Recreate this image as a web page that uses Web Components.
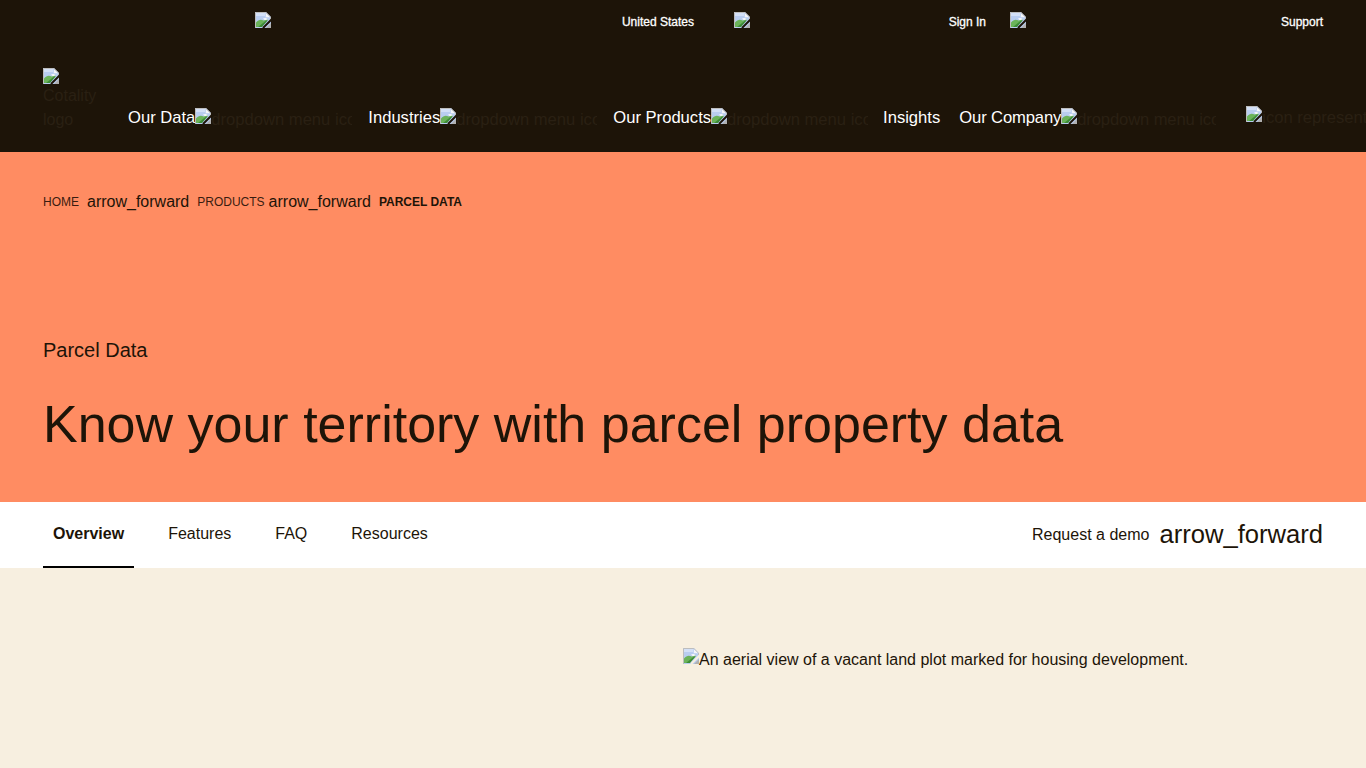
<!DOCTYPE html>
<html lang="en">
<head>
<meta charset="utf-8">
<title>Parcel Data</title>
<style>
  html, body { margin: 0; padding: 0; }
  body { font-family: "Liberation Sans", Arial, sans-serif; background: #f7efe0; color: #1d1408; height: 768px; overflow: hidden; }
</style>
</head>
<body>

<site-header>
  <utility-link slot="utility" label="United States" style="width:439px;margin-left:0"></utility-link>
  <utility-link slot="utility" label="Sign In" style="width:252px;margin-left:40px"></utility-link>
  <utility-link slot="utility" label="Support" style="width:313px;margin-left:24px"></utility-link>

  <nav-item slot="nav" label="Our Data" alt="dropdown menu icon" menu-width="157" style="margin-right:16px"></nav-item>
  <nav-item slot="nav" label="Industries" alt="dropdown menu icon" menu-width="157" style="margin-right:16px"></nav-item>
  <nav-item slot="nav" label="Our Products" alt="dropdown menu icon" menu-width="157" style="margin-right:15px"></nav-item>
  <nav-item slot="nav" label="Insights" style="margin-right:19px"></nav-item>
  <nav-item slot="nav" label="Our Company" alt="dropdown menu icon" menu-width="155" style="letter-spacing:-0.12px"></nav-item>
</site-header>

<page-hero eyebrow="Parcel Data" heading="Know your territory with parcel property data"></page-hero>

<tab-bar>
  <tab-link active>Overview</tab-link>
  <tab-link>Features</tab-link>
  <tab-link>FAQ</tab-link>
  <tab-link>Resources</tab-link>
</tab-bar>

<media-section alt="An aerial view of a vacant land plot marked for housing development."></media-section>

<script>
// Chrome's "image failed to load" glyph, redrawn since nothing can be loaded here
const BROKEN_ICON = `
  <svg width="16" height="16" viewBox="0 0 16 16" style="display:block;flex:none" aria-hidden="true">
    <path d="M0 0H11L16 5V16H0Z" fill="#b9cdf0"/>
    <path d="M1 1H10.5V5.5H15V4H1Z" fill="#d3e0f7"/>
    <path d="M11 0.5V5H15.5Z" fill="#f4f6fa"/>
    <path d="M8 6.5C9.5 5.5 12 5.8 13 7.5L10 8.5Z" fill="#f4f6fa"/>
    <path d="M1 15V10.5C3.5 7.5 6 7 8.5 8.5L13 7.5L6 15Z" fill="#6bb35a"/>
    <path d="M3 15L10.5 9L13 8L7 15Z" fill="#3d8c36"/>
    <path d="M0.5 16V0.5H10.8L15.5 5.2V8" fill="none" stroke="#bdbdbd"/>
    <path d="M16.5 7.5L8 16" fill="none" stroke="var(--broken-bg,#1d1408)" stroke-width="2"/>
    <path d="M16 11V16H11Z" fill="#b0b0b0"/>
  </svg>`;

// failed image: glyph followed by its alt text, clipped to the box it would have had
class BrokenImage extends HTMLElement {
  connectedCallback() {
    const alt = this.getAttribute('alt') || '';
    this.attachShadow({ mode: 'open' }).innerHTML = `
      <style>
        :host { display: inline-flex; align-items: flex-start; overflow: hidden; white-space: nowrap; line-height: 18px; }
        span { padding-top: 3px; }
      </style>
      ${BROKEN_ICON}<span>${alt}</span>`;
  }
}
customElements.define('broken-image', BrokenImage);

class UtilityLink extends HTMLElement {
  connectedCallback() {
    this.attachShadow({ mode: 'open' }).innerHTML = `
      <style>
        :host { display: flex; justify-content: space-between; align-items: flex-start; box-sizing: border-box; color: #fff; font-size: 12px; line-height: 18px; }
        span { padding-top: 1px; -webkit-text-stroke: 0.3px #fff; }
      </style>
      <broken-image></broken-image><span>${this.getAttribute('label')}</span>`;
  }
}
customElements.define('utility-link', UtilityLink);

class NavItem extends HTMLElement {
  connectedCallback() {
    const alt = this.getAttribute('alt');
    const w = this.getAttribute('menu-width');
    this.attachShadow({ mode: 'open' }).innerHTML = `
      <style>
        :host { display: flex; flex: none; align-items: flex-start; font-size: 16.6px; line-height: 20px; color: #fff; white-space: nowrap; }
        span.label { margin-top: -0.5px; }
        broken-image { flex: none; color: #2a2013; width: ${w}px; }
      </style>
      <span class="label">${this.getAttribute('label')}</span>
      ${alt ? `<broken-image alt="${alt}"></broken-image>` : ''}`;
  }
}
customElements.define('nav-item', NavItem);

class SiteHeader extends HTMLElement {
  constructor() {
    super();
    this.attachShadow({ mode: 'open' }).innerHTML = `
      <style>
        :host { display: block; height: 152px; background: #1d1408; --broken-bg: #1d1408; overflow: hidden; }
        .utility { display: flex; justify-content: flex-end; padding: 12px 43px 0 0; height: 68px; box-sizing: border-box; }
        .main { display: flex; align-items: flex-start; padding-left: 43px; }
        .logo { width: 85px; flex: none; color: #2a2013; font-size: 16px; line-height: 24px; }
        .logo svg { display: block; }
        .logo div { width: 62px; }
        .nav { display: flex; flex: none; padding-top: 40px; }
        .search { display: flex; width: 120px; margin-left: 30px; margin-top: 38px; color: #2a2013; font-size: 16.6px; line-height: 18px; white-space: nowrap; overflow: hidden; flex: none; }
        .search span { padding-top: 3px; }
      </style>
      <div class="utility"><slot name="utility"></slot></div>
      <div class="main">
        <div class="logo">${BROKEN_ICON}<div>Cotality logo</div></div>
        <div class="nav"><slot name="nav"></slot></div>
        <div class="search">${BROKEN_ICON}<span>icon representing search</span></div>
      </div>`;
  }
}
customElements.define('site-header', SiteHeader);

class PageHero extends HTMLElement {
  connectedCallback() {
    this.attachShadow({ mode: 'open' }).innerHTML = `
      <style>
        :host { display: block; box-sizing: border-box; height: 350px; background: #ff8c62; color: #1d1408; padding: 40px 43px 0; }
        .crumbs { display: flex; align-items: center; height: 20px; font-size: 12px; }
        .arrow { font-size: 16px; margin: 0 8px; }
        .arrow.tight { margin: 0 8px 0 4px; }
        .crumbs span.home { color: #3a1c10; }
        b { font-weight: 700; }
        .eyebrow { font-size: 20px; line-height: 24px; margin-top: 126px; }
        h1 { font-size: 52px; line-height: 64px; font-weight: 400; margin: 30px 0 0; white-space: nowrap; }
      </style>
      <div class="crumbs">
        <span class="home">HOME</span><span class="arrow">arrow_forward</span>
        <span class="home">PRODUCTS</span><span class="arrow tight">arrow_forward</span>
        <b>PARCEL DATA</b>
      </div>
      <div class="eyebrow">${this.getAttribute('eyebrow')}</div>
      <h1>${this.getAttribute('heading')}</h1>`;
  }
}
customElements.define('page-hero', PageHero);

class TabLink extends HTMLElement {
  connectedCallback() {
    this.attachShadow({ mode: 'open' }).innerHTML = `
      <style>
        :host { display: flex; align-items: center; box-sizing: border-box; height: 66px; padding: 0 10px; font-size: 16px; color: #1d1408; border-bottom: 2px solid transparent; }
        :host([active]) { font-weight: 700; border-bottom-color: #000; }
      </style>
      <slot></slot>`;
  }
}
customElements.define('tab-link', TabLink);

class TabBar extends HTMLElement {
  constructor() {
    super();
    this.attachShadow({ mode: 'open' }).innerHTML = `
      <style>
        :host { display: flex; justify-content: space-between; align-items: center; box-sizing: border-box; height: 66px; background: #fff; padding: 0 43px; color: #1d1408; }
        .tabs { display: flex; gap: 24px; }
        .cta { display: flex; align-items: center; gap: 10px; font-size: 16px; }
        .cta span:last-child { font-size: 25.6px; margin-bottom: 2px; }
      </style>
      <div class="tabs"><slot></slot></div>
      <div class="cta"><span>Request a demo</span><span>arrow_forward</span></div>`;
  }
}
customElements.define('tab-bar', TabBar);

class MediaSection extends HTMLElement {
  connectedCallback() {
    this.attachShadow({ mode: 'open' }).innerHTML = `
      <style>
        :host { display: block; box-sizing: border-box; height: 200px; padding: 80px 0 0 683px; --broken-bg: #f7efe0; font-size: 16px; color: #1d1408; }
      </style>
      <broken-image alt="${this.getAttribute('alt')}"></broken-image>`;
  }
}
customElements.define('media-section', MediaSection);
</script>
</body>
</html>
